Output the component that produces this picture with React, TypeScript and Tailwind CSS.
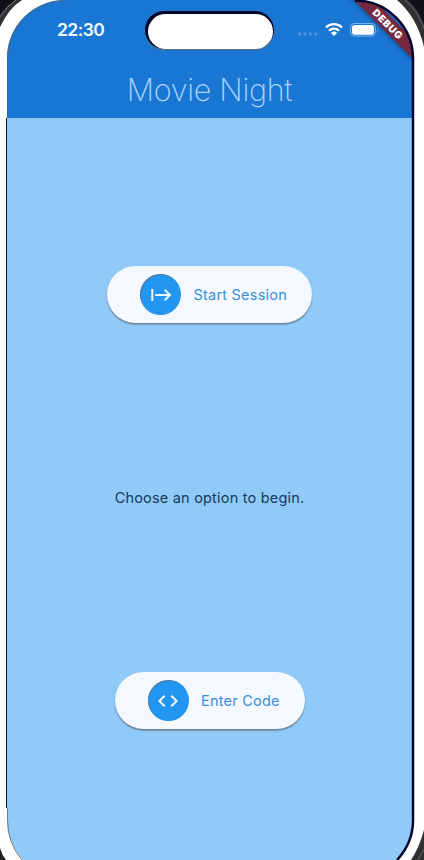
import type { ReactNode } from "react";

function BezelCorners() {
  return (
    <svg className="pointer-events-none absolute inset-0" width="424" height="860" viewBox="0 0 424 860" fill="none">
      <path d="M0 0H22Q9 8 0 27Z" fill="#303133" />
      <path d="M0 0H15Q6 6 0 15Z" fill="#111115" />
      <path d="M16 0Q6 7 0 17" stroke="#77787a" />
      <path d="M397 0H424V47Q417 17 397 0Z" fill="#303133" />
      <path d="M408 0H424V24Q418 9 408 0Z" fill="#111115" />
      <path d="M405 0Q418 10 424 29" stroke="#66676a" />
      <path d="M0 848Q2 855 6 860H0Z" fill="#222" />
      <path d="M424 830Q419 848 411 860H424Z" fill="#303133" />
      <path d="M424 849L418 860" stroke="#66676a" />
    </svg>
  );
}

function StatusIcons() {
  return (
    <svg className="absolute left-[297px] top-[18px]" width="90" height="24" viewBox="0 0 90 24" fill="none">
      <g fill="#4b95e0">
        <circle cx="2.500" cy="16" r="1.700" />
        <circle cx="8" cy="16" r="1.700" />
        <circle cx="13.300" cy="16" r="1.700" />
        <circle cx="18.700" cy="16" r="1.700" />
      </g>
      <g stroke="white" strokeWidth="2.300">
        <path d="M29 9.500A11.300 11.300 0 0 1 45 9.500" />
        <path d="M32 12.700A7.100 7.100 0 0 1 42 12.700" />
      </g>
      <path d="M37 18L33.900 14.900A4.500 4.500 0 0 1 40.100 14.900Z" fill="white" />
      <rect x="53.500" y="5.500" width="25" height="12.500" rx="4" stroke="#76b3ee" />
      <rect x="55" y="7" width="22" height="9.700" rx="2.700" fill="white" />
      <path d="M80.300 9.800Q82 11.800 80.300 13.700Z" fill="#76b3ee" />
    </svg>
  );
}

function PillButton({ label, className, children }: { label: string; className: string; children: ReactNode }) {
  return (
    <button
      className={`flex h-[57px] items-center rounded-full bg-[#f3f9fe] pl-[33px] text-[14.5px] tracking-[0.22px] text-[#3a8dd6] shadow-[0_1.5px_1.5px_#657d91] ${className}`}
    >
      <span className="mr-[12.5px] flex size-[41px] shrink-0 items-center justify-center rounded-full bg-[#2196f3] shadow-[inset_1px_1px_1px_#587c9c]">
        <svg width="24" height="24" viewBox="0 0 24 24" fill="none" stroke="#f0f9ff" strokeWidth="2">
          {children}
        </svg>
      </span>
      <span className="whitespace-nowrap">{label}</span>
    </button>
  );
}

export default function App() {
  return (
    <div className="relative h-[860px] w-[424px] overflow-hidden bg-white font-['Inter','Liberation_Sans',sans-serif]">
      <BezelCorners />
      <main className="relative ml-[7px] flex h-[878px] w-[405px] flex-col items-center overflow-hidden rounded-[58px] bg-[#90caf9]">
        <header className="flex h-[118px] w-full shrink-0 justify-center bg-[#1976d2]">
          <h1 className="mt-[70px] whitespace-nowrap text-[30.5px] font-extralight leading-[40px] tracking-[-0.3px] text-[#add6fa]">Movie Night</h1>
        </header>
        <PillButton label="Start Session" className="mt-[148px] w-[205px]">
          <path d="M3.300 6V18M6 12H21M15.700 6.700L21 12L15.700 17.300" />
        </PillButton>
        <p className="mt-[165px] h-5 whitespace-nowrap text-[14.5px] leading-5 tracking-[0.2px] text-[#153a59]">Choose an option to begin.</p>
        <PillButton label="Enter Code" className="mt-[164px] w-[190px]">
          <path d="M8.700 6.700L3.400 12L8.700 17.300M15.300 6.700L20.600 12L15.300 17.300" />
        </PillButton>
        <div className="absolute right-[-26px] top-[17px] flex h-[14px] w-[100px] rotate-45 items-center justify-center bg-[#76293e] text-[10px] font-black tracking-[0.7px] text-white shadow-[0_1px_4px_#174a80]">
          DEBUG
        </div>
      </main>
      <svg className="pointer-events-none absolute inset-0" width="424" height="860" viewBox="0 0 424 860" fill="none">
        <path d="M65 .5A58 58 0 0 0 7.500 58V118" stroke="#566575" />
        <path d="M6.500 118V808" stroke="#111" />
        <path d="M7.500 808V820Q7.500 843 22 860" stroke="#777c80" />
        <path d="M355 .5A58 58 0 0 1 413 58V820Q413 843 397 860" stroke="#00052d" strokeWidth="2.500" />
      </svg>
      <span className="absolute left-[57px] top-[20px] text-[17.5px] font-semibold leading-5 tracking-[-0.55px] text-[#f0f9ff]">22:30</span>
      <div className="absolute left-[145px] top-[11px] h-[38px] w-[129px] rounded-full bg-[#00052d] shadow-[0_1px_1px_#656d76]">
        <div className="ml-[3px] mt-[3px] h-[35px] w-[125px] rounded-full bg-white" />
      </div>
      <StatusIcons />
    </div>
  );
}
